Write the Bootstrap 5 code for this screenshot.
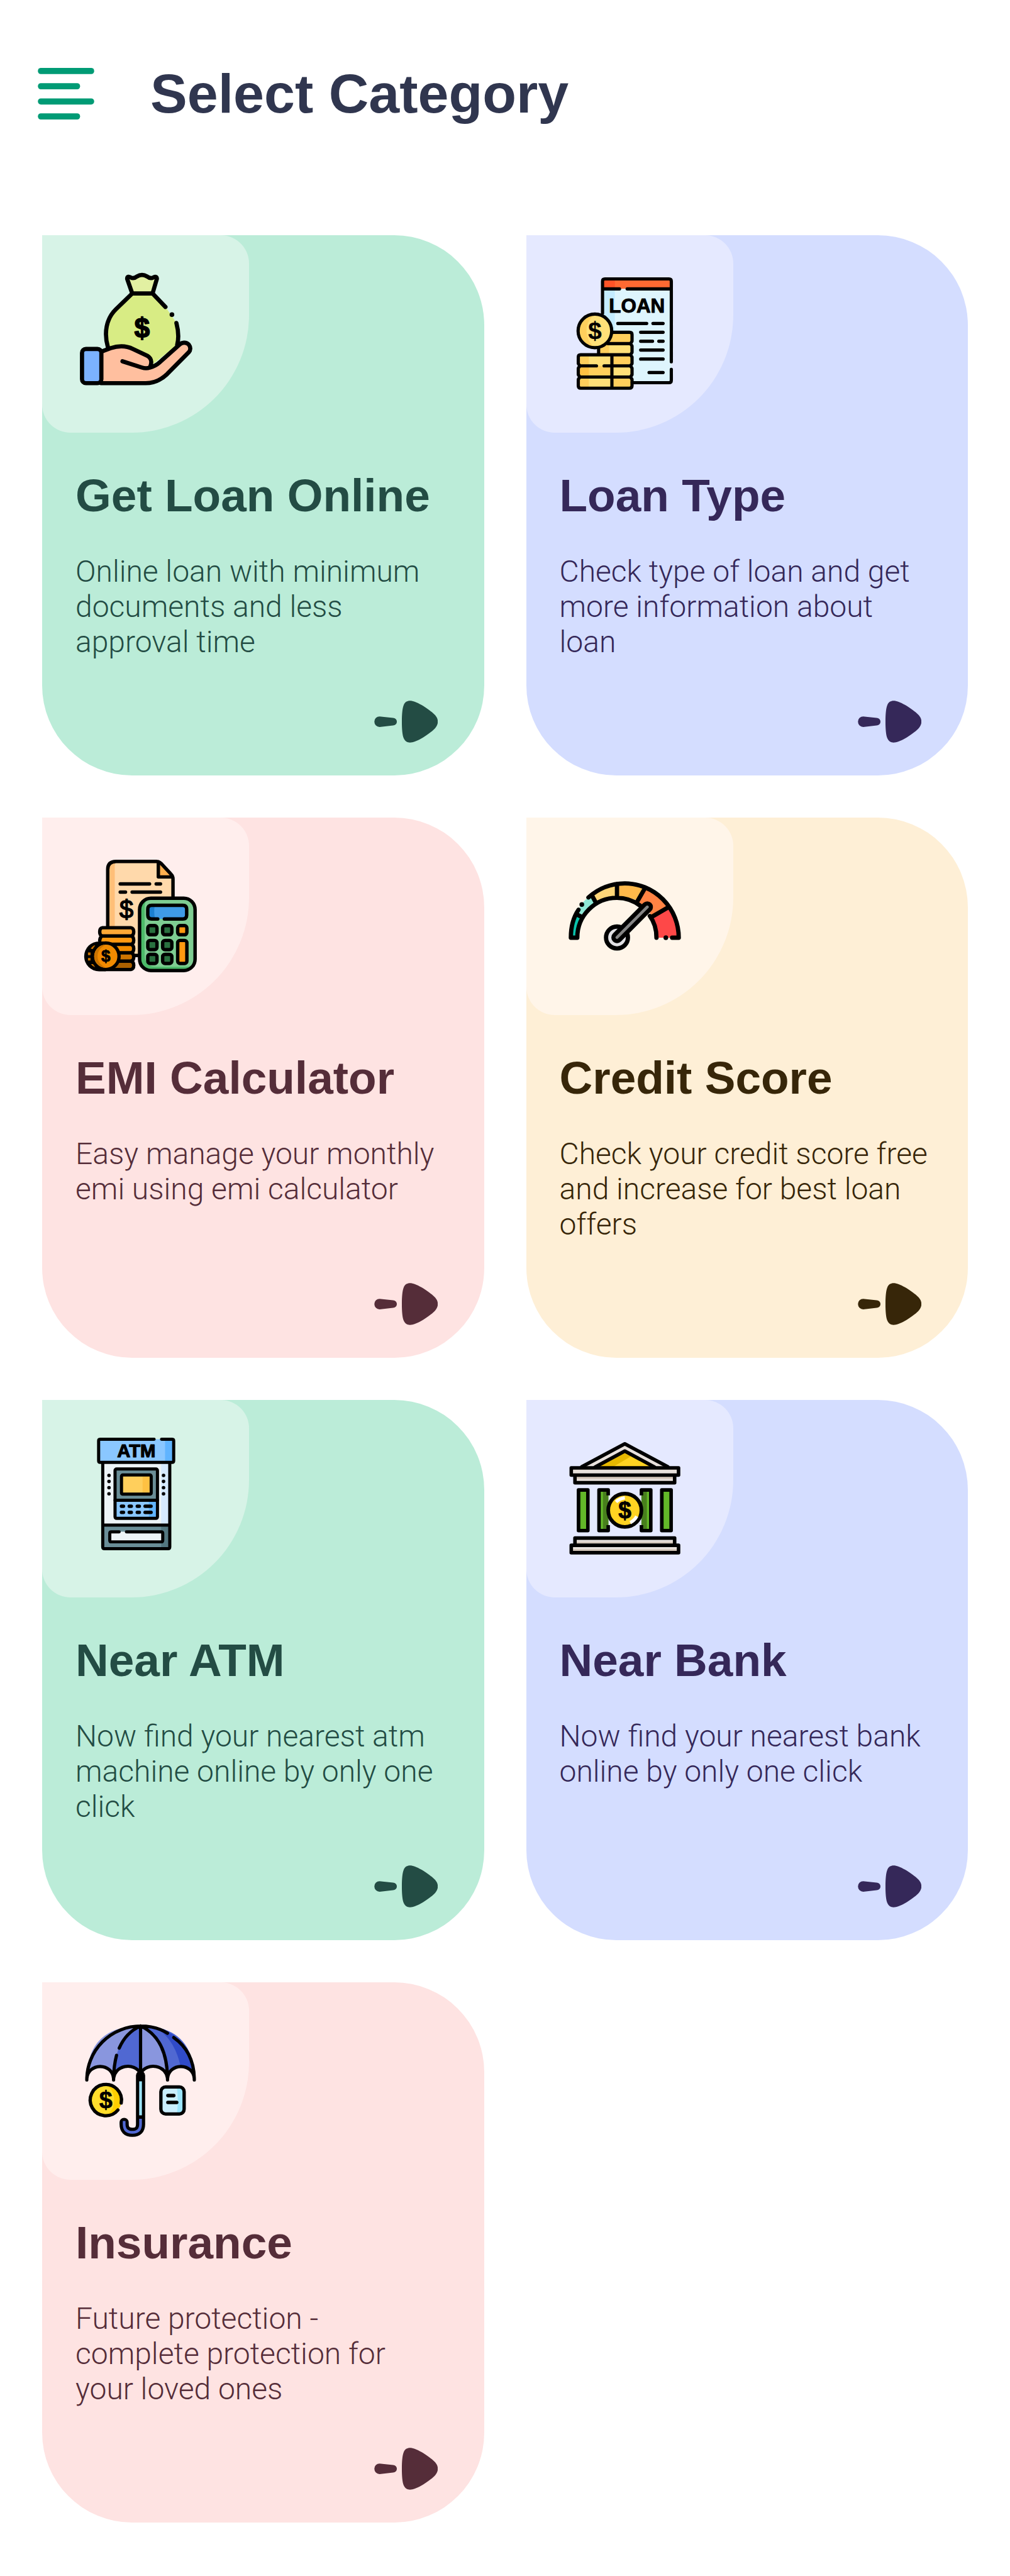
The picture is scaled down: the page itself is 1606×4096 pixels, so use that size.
<!DOCTYPE html>
<html lang="en">
<head>
<meta charset="utf-8">
<meta name="viewport" content="width=device-width, initial-scale=1">
<title>Select Category</title>
<link href="https://cdn.jsdelivr.net/npm/bootstrap@5.3.0/dist/css/bootstrap.min.css" rel="stylesheet">
<style>
body{background:#fff;font-family:"Liberation Sans",Arial,sans-serif}
.topbar{padding:89px 60px 0;gap:89px;height:306px}
.menu-btn{width:90px;height:120px}
.menu-btn svg{width:90px;height:82px}
.page-title{font-size:88px;line-height:120px;font-weight:700;color:#30364f}
.tiles{display:grid;grid-template-columns:repeat(2,minmax(0,1fr));gap:67px;padding:68px 67px 85px}
.tile{min-height:859px;border-radius:0 143px 143px 143px;background:var(--bg);color:var(--ink)}
.tile:hover{color:var(--ink)}
.tile-icon{width:329px;height:314px;padding:67px;background:var(--pane);border-radius:0 45px 187px 45px}
.tile-icon.inset-sm{padding:60px}
.tile-icon svg{display:block;width:179px;height:179px;overflow:visible}
.tile-body{padding:55px 58px 0 53px}
.tile-title{font-size:73px;line-height:90px;font-weight:700;margin:0 0 48px}
.tile-text{font-family:Roboto,"Liberation Sans",sans-serif;font-size:48px;line-height:56px;font-weight:300;margin:0}
.tile-arrow{width:101px;height:67px;margin:auto 74px 52px auto}
.green{--bg:#bbecd8;--pane:#d7f3e7;--ink:#234c44}
.blue{--bg:#d4ddff;--pane:#e5e9ff;--ink:#352859}
.pink{--bg:#fee3e2;--pane:#ffeeed;--ink:#552d39}
.cream{--bg:#feefd6;--pane:#fff5e9;--ink:#372609}
.ln{fill:none;stroke:#000;stroke-linecap:round;stroke-linejoin:round}
.glyph{font-family:"Liberation Sans",sans-serif;font-weight:700;text-anchor:middle;fill:#000;stroke:#000;stroke-linejoin:round}
</style>
</head>
<body>
<svg class="d-none" aria-hidden="true">
<symbol id="arrow" viewBox="0 0 108 72"><path fill="currentColor" d="M9 27L32 29.500A6.500 6.500 0 0 1 32 42.500L9 45A9 9 0 0 1 9 27ZM47 36C47 23 48 13 50 8C53 1 58-.5 65 .8C76 3 97 17 104 25C110 32 110 40 104 47C97 55 76 69 65 71.200C58 72.500 53 71 50 64C48 59 47 49 47 36Z"/></symbol>
</svg>
<header class="topbar d-flex align-items-start">
<button type="button" class="menu-btn btn p-0 border-0 d-flex align-items-center" aria-label="Menu"><svg viewBox="0 0 96 88" fill="#009b75"><rect width="96" height="10.500" rx="5"/><rect y="26" width="72" height="10.500" rx="5"/><rect y="52" width="96" height="10.500" rx="5"/><rect y="77.500" width="72" height="10.500" rx="5"/></svg></button>
<h1 class="page-title m-0">Select Category</h1>
</header>
<main class="tiles">

<a href="#" class="tile green d-flex flex-column text-decoration-none">
<div class="tile-icon inset-sm"><svg viewBox="78 72 576 576" aria-hidden="true">
<path fill="#d8ec84" d="M348 177L262 258C215 305 198 370 221 455L450 540L575 440C585 400 583 360 572 327L516 246L450 177Z"/>
<path fill="#e2f0a2" d="M322 98C345 112 360 98 372 90C388 80 404 80 420 90C432 98 447 112 470 98L450 177H346Z"/>
<path fill="#ffbf9f" d="M188 475C260 440 305 440 350 461L425 497C450 512 446 540 436 556L480 545L590 440C625 410 665 445 635 478L520 593C490 622 450 636 415 636H188Z"/>
<rect x="89" y="461" width="99" height="175" rx="20" fill="#7bb2ff"/>
<g class="ln" stroke-width="21.500"><path d="M346 177L320 102C320 88 330 90 338 95C350 102 360 98 370 90C388 79 404 79 422 90C432 98 442 102 454 95C462 90 472 90 472 102L450 177H346L262 258C212 307 201 380 221 450"/><path d="M450 177L516 246M572 328C583 370 585 405 576 440"/><path d="M188 475L235 457C280 442 315 444 350 461L425 497C450 512 444 540 436 556C420 562 408 560 395 556L296 524M436 556C460 550 475 540 490 526L585 441C600 425 622 425 635 438C646 452 645 467 635 478L524 590C490 622 450 636 415 636H188"/><rect x="89" y="461" width="99" height="175" rx="20"/></g>
<circle cx="549" cy="285" r="12"/><text class="glyph" x="396" y="402" font-size="140" stroke-width="6">$</text>
</svg></div>
<div class="tile-body"><h2 class="tile-title">Get Loan Online</h2><p class="tile-text">Online loan with minimum documents and less approval time</p></div>
<svg class="tile-arrow" aria-hidden="true"><use href="#arrow"/></svg></a>

<a href="#" class="tile blue d-flex flex-column text-decoration-none">
<div class="tile-icon"><svg viewBox="54 66 576 576" aria-hidden="true">
<rect x="228" y="74" width="352" height="531" rx="10" fill="#def5fd"/><path fill="#c4ecff" d="M228 125H291V347H228Z"/><path fill="#ff6932" d="M228 80H580V125H228Z"/><path fill="#ff5327" d="M228 80H291V125H228Z"/>
<path fill="#ffe078" d="M208 347H379V632H104V462H208Z"/><path fill="#ffcf5c" d="M104 462H158V632H104ZM208 405H261V462H208ZM208 347H379V405H208ZM276 462H379V519H276ZM276 576H379V632H276ZM158 519H276V576H158Z"/><path fill="#ffc143" d="M104 519H158V576H104Z"/><circle cx="189" cy="340" r="87" fill="#ffe078"/><path fill="#ffcf5c" d="M189 253A87 87 0 0 0 189 427Q146 390 146 340T189 253Z"/>
<g class="ln" stroke-width="16.500"><path d="M228 250V86Q228 74 240 74H568Q580 74 580 86V498M580 537V593Q580 605 568 605H380M228 125H315M354 125H580M306 302H454M486 302H538M423 347H538M423 393H484M516 393H538M423 438H538M423 484H538M466 553H538"/><circle cx="189" cy="340" r="86"/><path d="M280 347H366Q379 347 379 359V393L371 405L379 417V450L371 462L379 474V507L371 519L379 531V564L371 576L379 588V620Q379 633 366 633H116Q104 633 104 620V588L112 576L104 564V531L112 519L104 507V474Q104 462 116 462H371M208 430V460M255 405H371M112 519H197M236 519H371M112 576H371M276 465V630"/></g>
<text class="glyph" x="404" y="245" font-size="101" stroke-width="3">LOAN</text><text class="glyph" x="189" y="381" font-size="124" stroke-width="1">$</text>
</svg></div>
<div class="tile-body"><h2 class="tile-title">Loan Type</h2><p class="tile-text">Check type of loan and get more information about loan</p></div>
<svg class="tile-arrow" aria-hidden="true"><use href="#arrow"/></svg></a>

<a href="#" class="tile pink d-flex flex-column text-decoration-none">
<div class="tile-icon"><svg viewBox="72 72 576 576" aria-hidden="true">
<path fill="#ffd9ab" d="M192 562V122Q192 81 235 81H440Q455 81 465 91L515 145Q526 155 526 170V562Z"/><path fill="#ffbf78" d="M192 420V122Q192 81 235 81Q228 90 228 105V420Z"/><path fill="#ffb04f" d="M450 85L522 160H450Z"/>
<rect x="355" y="269" width="284" height="370" rx="58" fill="#7ecd92"/><path fill="#4cba69" d="M400 269Q355 275 355 320V580Q355 639 413 639H582Q620 639 634 612Q620 620 590 620H440Q381 620 381 560V310Q381 285 400 269Z"/>
<rect x="397" y="305" width="199" height="70" rx="20" fill="#3f9be6"/><path fill="#1c80d0" d="M432 305H417Q397 305 397 325V355Q397 375 417 375H435Q430 360 430 340T432 305Z"/>
<g fill="#29703f"><path d="M397 409H444V456H397ZM473 409H520V456H473ZM397 485H444V532H397ZM473 485H520V532H473ZM397 556H444V603H397ZM473 556H520V603H473Z"/></g><path fill="#ff9911" d="M550 409H597V456H550ZM550 485H597V603H550Z"/>
<path fill="#ffa836" d="M150 420H325V462H150Z"/><path fill="#ff9811" d="M150 462H325V505H150Z"/><path fill="#f08a00" d="M150 505H325V548H150Z"/><path fill="#ce7400" d="M230 548H325V590H230Z"/><path fill="#ab6000" d="M200 590H325V634H200Z"/>
<g class="ln" stroke-width="17.500"><path d="M192 415V122Q192 81 235 81H440Q455 81 465 91L515 145Q526 155 526 170V265M451 88V160H520M256 196H406M440 196H462M256 238H283M317 238H462M325 562H352"/><path d="M165 420H310Q325 422 325 441Q325 460 310 462Q325 465 325 484Q325 503 310 505Q325 508 325 527Q325 546 310 548Q325 551 325 570Q325 588 310 591Q325 594 325 612Q325 632 310 634H190M165 420Q151 422 151 441Q151 460 165 462H310M165 462Q153 466 151 486M205 505H310M248 548H310M240 591H310"/><rect x="355" y="269" width="284" height="370" rx="58"/><path d="M448 375H417Q397 375 397 355V325Q397 305 417 305H576Q596 305 596 325V355Q596 375 576 375H482"/><rect x="397" y="409" width="47" height="47" rx="12"/><rect x="473" y="409" width="47" height="47" rx="12"/><rect x="550" y="409" width="47" height="47" rx="12"/><rect x="397" y="485" width="47" height="47" rx="12"/><rect x="473" y="485" width="47" height="47" rx="12"/><rect x="397" y="556" width="47" height="47" rx="12"/><rect x="473" y="556" width="47" height="47" rx="12"/><rect x="550" y="485" width="47" height="118" rx="12"/></g>
<path d="M182 490H148A76 76 0 0 0 148 643H182Z"/><path fill="#c87100" d="M105 527Q115 512 128 510L118 530ZM91 547H104V560H91ZM91 575H104V588H91ZM106 606H118L128 622Q115 618 106 606Z"/>
<circle cx="182" cy="566" r="68" fill="#f08a00" stroke="#000" stroke-width="17"/><path fill="#ca7300" d="M182 507A59 59 0 0 0 182 625Q140 605 140 566T182 507Z"/>
<text class="glyph" x="182" y="594" font-size="84" stroke-width="3">$</text><text class="glyph fw-normal" x="288" y="372" font-size="128" stroke-width="5">$</text>
</svg></div>
<div class="tile-body"><h2 class="tile-title">EMI Calculator</h2><p class="tile-text">Easy manage your monthly emi using emi calculator</p></div>
<svg class="tile-arrow" aria-hidden="true"><use href="#arrow"/></svg></a>

<a href="#" class="tile cream d-flex flex-column text-decoration-none">
<div class="tile-icon"><svg viewBox="84 12 576 576" aria-hidden="true">
<path fill="#8ee8d6" d="M135 268Q155 225 186 206H210L224 234Q175 258 146 300L125 290Z"/><path fill="#0ac4ad" d="M96 411Q98 340 125 294L145 302Q128 345 128 411Z"/><path fill="#ffd678" d="M205 195Q260 150 332 136V207Q275 207 224 234Z"/><path fill="#ffb94a" d="M332 136Q410 125 475 155L438 220Q390 204 332 207Z"/><path fill="#ff8344" d="M475 160Q545 190 594 256L512 303Q480 245 438 228Z"/><path fill="#fe4848" d="M594 256Q645 325 648 411H534Q535 355 512 303Z"/>
<g class="ln" stroke-width="22"><path d="M135 268Q96 325 96 411H129A202 203 0 0 1 332 207A202 203 0 0 1 455 250M500 300Q534 345 534 411M186 205Q265 134 372 133A277 278 0 0 1 648 411H614M125 291L146 302M208 202L224 232M332 136V207M475 158L438 222M594 256L512 303"/></g><path d="M582 411h.1M152 241h.1" class="ln" stroke-width="24"/>
<circle cx="332" cy="410" r="56" fill="#e1e1e4" stroke="#000" stroke-width="22"/><path class="ln" stroke-width="58" d="M332 410L487 254"/><path d="M332 410L487 254" fill="none" stroke="#858585" stroke-width="15" stroke-linecap="round"/>
</svg></div>
<div class="tile-body"><h2 class="tile-title">Credit Score</h2><p class="tile-text">Check your credit score free and increase for best loan offers</p></div>
<svg class="tile-arrow" aria-hidden="true"><use href="#arrow"/></svg></a>

<a href="#" class="tile green d-flex flex-column text-decoration-none">
<div class="tile-icon inset-sm"><svg viewBox="14 84 576 576" aria-hidden="true">
<path fill="#edf4f7" d="M131 210H474V532H131Z"/><path fill="#d6eaff" d="M430 210H474V532H430Z"/><path fill="#6a8e97" d="M131 532H474V651H131Z"/><path fill="#537780" d="M430 532H474V651H430Z"/><path fill="#8ac7ff" d="M110 92H494V210H110Z"/><path fill="#60b4ff" d="M450 92H494V210H450Z"/><path fill="#edf4f7" d="M167 565H438V617H167Z"/><path fill="#6a8e97" d="M194 244H411V404H194Z"/><path fill="#8ac7ff" d="M194 404H411V497H194Z"/><path fill="#60b4ff" d="M367 404H411V497H367Z"/><path fill="#ffcf5c" d="M226 275H379V373H226Z"/><path fill="#ffc143" d="M335 275H379V373H335Z"/>
<g class="ln" stroke-width="16"><path d="M394 92H118Q110 92 110 100V202Q110 210 118 210H486Q494 210 494 202V100Q494 92 486 92H432M131 214V643Q131 652 140 652H465Q474 652 474 643V214M131 531H474M215 566H175Q167 566 167 574V609Q167 617 175 617H430Q438 617 438 609V574Q438 566 430 566H252M194 404H411"/><rect x="194" y="244" width="217" height="253" rx="8"/><rect x="227" y="275" width="152" height="98" rx="6"/></g>
<path class="ln" stroke-width="18" d="M227 435H237M267 435H277M308 435H318M348 435H378M227 466H237M267 466H277M308 466H318M348 466H378M163 277h.1M163 308h.1M163 340h.1M163 371h.1M442 277h.1M442 308h.1M442 340h.1M442 371h.1"/>
<text class="glyph" x="303" y="185" font-size="94" stroke-width="4">ATM</text>
</svg></div>
<div class="tile-body"><h2 class="tile-title">Near ATM</h2><p class="tile-text">Now find your nearest atm machine online by only one click</p></div>
<svg class="tile-arrow" aria-hidden="true"><use href="#arrow"/></svg></a>

<a href="#" class="tile blue d-flex flex-column text-decoration-none">
<div class="tile-icon"><svg viewBox="54 78 576 576" aria-hidden="true">
<path fill="#e8e1dc" d="M128 206L342 88L558 206Z"/><path fill="#ffd322" d="M190 206L342 124L494 206Z"/><path fill="#e6b800" d="M190 206L342 124L372 152L280 206Z"/>
<path fill="#e8e1dc" d="M68 210H617V247H68ZM86 247H597V286H86ZM86 568H597V606H86ZM68 606H617V645H68Z"/><path fill="#d3c6b9" d="M68 210H617V220H68ZM86 250H597V266H86ZM86 588H597V600H86ZM68 626H617V640H68Z"/>
<path fill="#63b829" d="M105 323H153V531H105ZM210 323H258V531H210ZM427 323H475V531H427ZM531 323H579V531H531Z"/><path fill="#4f9d20" d="M105 323H117V531H105ZM531 323H543V531H531Z"/><path fill="#487f1d" d="M230 323H258V531H230ZM427 323H455V531H427Z"/>
<g class="ln" stroke-width="18"><path d="M122 204L342 87L562 204M190 206L342 124L494 206"/><rect x="68" y="210" width="549" height="37"/><path d="M87 250V286H597V250M87 604V569H597V604"/><rect x="68" y="606" width="549" height="38"/><rect x="105" y="323" width="48" height="208"/><rect x="531" y="323" width="48" height="208"/><path stroke-linecap="butt" d="M257 351V323H210V531H257V503M427 351V323H475V531H427V503"/></g>
<circle cx="342" cy="427" r="85" fill="#ffd322" stroke="#000" stroke-width="19"/><path fill="none" stroke="#fff" stroke-width="17" d="M297 384Q315 367 342 363M403 458Q391 480 370 490"/>
<text class="glyph" x="342" y="467" font-size="119" stroke-width="3">$</text>
</svg></div>
<div class="tile-body"><h2 class="tile-title">Near Bank</h2><p class="tile-text">Now find your nearest bank online by only one click</p></div>
<svg class="tile-arrow" aria-hidden="true"><use href="#arrow"/></svg></a>

<a href="#" class="tile pink d-flex flex-column text-decoration-none">
<div class="tile-icon"><svg viewBox="72 84 576 576" aria-hidden="true">
<path fill="#8996de" d="M85 368Q85 92 360 92V340Q340 299 292 299Q222 299 222 368Q222 299 154 299T85 368Z"/><path fill="#5068d2" d="M360 92Q225 140 222 368Q222 299 292 299Q340 299 360 340Z"/><path fill="#8996de" d="M360 92Q495 140 498 368Q498 299 428 299Q380 299 360 340Z"/><path fill="#5068d2" d="M360 92Q635 92 635 368Q635 299 567 299T498 368Q495 140 360 92Z"/><path fill="#304bc8" d="M440 101Q635 150 635 368Q630 310 565 299Q535 160 440 101Z"/>
<g class="ln" stroke-width="16.500"><path d="M498 129Q440 92 360 92A275 275 0 0 0 85 368C85 276 222 276 222 368C222 290 330 275 360 335C390 275 498 290 498 368C498 276 635 276 635 368Q635 225 530 151M360 92Q285 125 251 205M237 242Q222 300 222 368M360 92V340M360 92Q498 155 498 368"/></g>
<path class="ln" stroke-width="47" d="M360 345V595Q360 636 318 636Q276 636 276 594V585"/><path d="M360 375V549" fill="none" stroke="#9ce4fb" stroke-width="14"/><path d="M360 567V595Q360 636 318 636Q276 636 276 594V578" fill="none" stroke="#5068d2" stroke-width="14" stroke-linejoin="round"/>
<circle cx="182" cy="472" r="80" fill="#ffde2c"/><path fill="#ffcf00" d="M182 392A80 80 0 0 1 182 552Q225 525 225 472T182 392Z"/><path class="ln" stroke-width="17" d="M261 486A80 80 0 1 0 244 522"/><text class="glyph" x="182" y="513" font-size="122" stroke-width="2">$</text>
<rect x="464" y="404" width="119" height="138" rx="24" fill="#c9eefd"/><path fill="#9ce4fb" d="M545 404Q583 404 583 430V520Q583 542 545 542Q550 520 550 475T545 404Z"/><rect class="ln" stroke-width="17" x="464" y="404" width="119" height="138" rx="24"/><path class="ln" stroke-width="18" d="M500 448H530M500 483H545"/>
</svg></div>
<div class="tile-body"><h2 class="tile-title">Insurance</h2><p class="tile-text">Future protection - complete protection for your loved ones</p></div>
<svg class="tile-arrow" aria-hidden="true"><use href="#arrow"/></svg></a>
</main>
<script src="https://cdn.jsdelivr.net/npm/bootstrap@5.3.0/dist/js/bootstrap.bundle.min.js"></script>
</body>
</html>
